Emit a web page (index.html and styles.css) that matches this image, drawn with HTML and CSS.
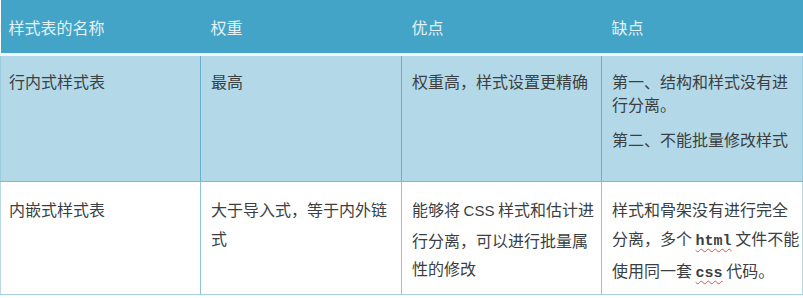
FILE: index.html
```html
<!DOCTYPE html>
<html lang="zh-CN">
<head>
<meta charset="utf-8">
<title>样式表对比</title>
<link rel="stylesheet" href="styles.css">
</head>
<body>
<table class="cmp">
  <colgroup>
    <col class="c1"><col class="c2"><col class="c3"><col class="c4">
  </colgroup>
  <thead>
    <tr class="head">
      <th>样式表的名称</th>
      <th>权重</th>
      <th>优点</th>
      <th>缺点</th>
    </tr>
  </thead>
  <tbody>
    <tr class="row-a">
      <td>行内式样式表</td>
      <td>最高</td>
      <td>权重高，样式设置更精确</td>
      <td>
        <p>第一、结构和样式没有进行分离。</p>
        <p class="gap">第二、不能批量修改样式</p>
      </td>
    </tr>
    <tr class="row-b">
      <td>内嵌式样式表</td>
      <td>大于导入式，等于内外链式</td>
      <td>能够将 <span class="latin">CSS</span> 样式和估计进行分离，可以进行批量属性的修改</td>
      <td>样式和骨架没有进行完全分离，多个 <span class="code">html</span> 文件不能使用同一套 <span class="code">css</span> 代码。</td>
    </tr>
  </tbody>
</table>
</body>
</html>
```
FILE: styles.css
```css
html, body {
  margin: 0;
  padding: 0;
  background: #ffffff;
}

.cmp {
  width: 802px;
  table-layout: fixed;
  border-collapse: collapse;
  font-family: "Noto Sans CJK SC", "Noto Sans", sans-serif;
  font-size: 16px;
  color: #3b3f42;
}

.c1 { width: 200px; }
.c2 { width: 201px; }
.c3 { width: 200px; }
.c4 { width: 201px; }

.head th {
  height: 53px;
  padding: 0 0 0 10px;
  background: #43a4c7;
  color: #e3f1f7;
  font-weight: 400;
  text-align: left;
  vertical-align: middle;
  border-bottom: 3px solid #eef7fa;
}
.head th:first-child { padding-left: 8px; }

td {
  vertical-align: top;
  padding: 0 0 0 10px;
  text-align: left;
}
td:first-child { padding-left: 8px; }

.row-a td {
  height: 127px;
  box-sizing: border-box;
  padding-top: 14px;
  line-height: 23px;
  background: #b3d9e8;
  border-left: 1px solid #6aaecb;
  border-bottom: 1px solid #7fb9d0;
}
.row-a td:first-child { border-left: 1px solid #9ccbdd; }
.row-a td:last-child { border-right: 1px solid #9ccbdd; }

.row-b td {
  height: 113px;
  box-sizing: border-box;
  padding-top: 13px;
  line-height: 28.5px;
  background: #ffffff;
  border-left: 1px solid #8ec5d9;
  border-bottom: 1px solid #a9d2e1;
}
.row-b td:first-child { border-left: 1px solid #b7d9e6; }
.row-b td:last-child { border-right: 1px solid #b7d9e6; }

td p { margin: 0; }
td p.gap { margin-top: 12px; }

.latin {
  font-family: "Liberation Sans", "Noto Sans", sans-serif;
  font-size: 15px;
}

.code {
  font-family: "Liberation Mono", "DejaVu Sans Mono", monospace;
  font-weight: 700;
  font-size: 15px;
  text-decoration: underline wavy #d9534f;
  text-decoration-thickness: 1px;
  text-underline-offset: 3px;
}
```
